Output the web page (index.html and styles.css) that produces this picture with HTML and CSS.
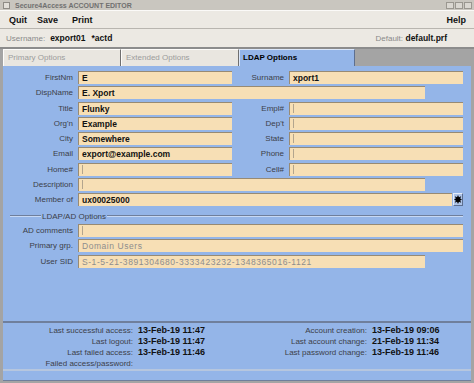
FILE: index.html
```html
<!DOCTYPE html>
<html lang="en">
<head>
    <meta charset="UTF-8">
    <title>Secure4Access ACCOUNT EDITOR</title>
    <link rel="stylesheet" href="styles.css">
</head>
<body>
    <div class="window">
        <div class="titlebar">
            <span class="tb-box"></span>
            <span class="tb-title">Secure4Access ACCOUNT EDITOR</span>
            <span class="tb-btns"><i></i><i></i><i></i></span>
        </div>

        <div class="menubar">
            <span>Quit</span>
            <span class="m-save">Save</span>
            <span class="m-print">Print</span>
            <span class="m-help">Help</span>
        </div>

        <div class="userbar">
            <span class="muted">Username:</span>
            <b class="uname">export01</b>
            <b class="flags">*actd</b>
            <span class="default"><span class="muted">Default:</span> <b>default.prf</b></span>
        </div>

        <div class="tabs">
            <div class="tab">Primary Options</div>
            <div class="tab">Extended Options</div>
            <div class="tab active">LDAP Options</div>
        </div>

        <div class="panel">
            <div class="form">
                <label class="lbl">FirstNm</label><div class="fld">E</div>
                <label class="lbl">Surname</label><div class="fld">xport1</div>

                <label class="lbl">DispName</label><div class="fld wide">E. Xport</div>

                <label class="lbl">Title</label><div class="fld">Flunky</div>
                <label class="lbl">Empl#</label><div class="fld empty"></div>

                <label class="lbl">Org'n</label><div class="fld">Example</div>
                <label class="lbl">Dep't</label><div class="fld empty"></div>

                <label class="lbl">City</label><div class="fld">Somewhere</div>
                <label class="lbl">State</label><div class="fld empty"></div>

                <label class="lbl">Email</label><div class="fld">export@example.com</div>
                <label class="lbl">Phone</label><div class="fld empty"></div>

                <label class="lbl">Home#</label><div class="fld empty"></div>
                <label class="lbl">Cell#</label><div class="fld empty"></div>

                <label class="lbl">Description</label><div class="fld wide empty"></div>

                <label class="lbl">Member of</label>
                <div class="member">
                    <div class="fld">ux00025000</div>
                    <span class="pick">
                        <svg width="8" height="9" viewBox="0 0 8 9">
                            <polygon points="4,0 5,2.3 7.2,1.3 6.2,3.5 8,4.5 6.2,5.5 7.2,7.7 5,6.7 4,9 3,6.7 0.8,7.7 1.8,5.5 0,4.5 1.8,3.5 0.8,1.3 3,2.3" fill="#000"/>
                        </svg>
                    </span>
                </div>

                <div class="sep"><span>LDAP/AD Options</span></div>

                <label class="lbl">AD comments</label><div class="fld full empty"></div>
                <label class="lbl">Primary grp.</label><div class="fld full dim">Domain Users</div>
                <label class="lbl">User SID</label><div class="fld wide dim">S-1-5-21-3891304680-3333423232-1348365016-1121</div>
            </div>
        </div>

        <div class="status">
            <span class="s-lbl">Last successful access:</span><span class="s-val">13-Feb-19 11:47</span>
            <span class="s-lbl">Account creation:</span><span class="s-val">13-Feb-19 09:06</span>

            <span class="s-lbl">Last logout:</span><span class="s-val">13-Feb-19 11:47</span>
            <span class="s-lbl">Last account change:</span><span class="s-val">21-Feb-19 11:34</span>

            <span class="s-lbl">Last failed access:</span><span class="s-val">13-Feb-19 11:46</span>
            <span class="s-lbl">Last password change:</span><span class="s-val">13-Feb-19 11:46</span>

            <span class="s-lbl">Failed access/password:</span><span class="s-val"></span>
        </div>

        <div class="foot"></div>
    </div>
</body>
</html>
```

FILE: styles.css
```css
body {
    margin: 0;
    font-family: "Liberation Sans", Arial, sans-serif;
    background-color: #a4a4a4;
}
.window {
    width: 474px;
    height: 383px;
    overflow: hidden;
    background-color: #a4a4a4;
}

/* title bar */
.titlebar {
    height: 10px;
    background-color: #c9c6bf;
    display: flex;
    align-items: center;
}
.tb-box {
    width: 7px;
    height: 7px;
    margin-left: 3px;
    box-sizing: border-box;
    border: 1px solid #8f8c86;
    background-color: #e2dfd9;
}
.tb-title {
    margin-left: 5px;
    font-size: 7px;
    font-weight: bold;
    color: #707070;
}
.tb-btns {
    margin-left: auto;
    margin-right: 2px;
    display: flex;
    gap: 1px;
}
.tb-btns i {
    width: 8px;
    height: 7px;
    box-sizing: border-box;
    border: 1px solid #9a9790;
    background-color: #dad7d1;
}

/* menu */
.menubar {
    height: 19px;
    box-sizing: border-box;
    background-color: #ece9e3;
    border-top: 1px solid #fbfaf8;
    border-bottom: 1px solid #b8b5af;
    display: flex;
    align-items: center;
    padding: 0 8px 0 9px;
    font-size: 9px;
    font-weight: bold;
    color: #111;
}
.m-save {
    margin-left: 10px;
}
.m-print {
    margin-left: 14px;
}
.m-help {
    margin-left: auto;
}

.userbar {
    height: 20px;
    box-sizing: border-box;
    background-color: #ece9e3;
    border-bottom: 2px solid #8c8c8c;
    display: flex;
    align-items: center;
    padding: 0 27px 0 6px;
    font-size: 8.5px;
    color: #111;
}
.muted {
    font-size: 8px;
    color: #8a8a8a;
}
.uname {
    margin-left: 5px;
}
.flags {
    margin-left: 6px;
}
.default {
    margin-left: auto;
}

/* tabs */
.tabs {
    height: 17px;
    display: flex;
    align-items: flex-end;
    padding-left: 3px;
}
.tab {
    width: 118px;
    height: 17px;
    box-sizing: border-box;
    border: 1px solid;
    border-color: #fdfcfa #6f6f6f transparent #fdfcfa;
    border-bottom: none;
    background-color: #e9e6e0;
    color: #9c9c9c;
    font-size: 8px;
    line-height: 16px;
    padding-left: 4px;
}
.tab.active {
    width: 116px;
    background-color: #94b5e8;
    border-color: #dbe7fa #5d6f90 transparent #dbe7fa;
    color: #000;
    font-weight: bold;
    padding-left: 3px;
}

/* main form */
.panel {
    height: 255px;
    margin: 0 3px;
    padding-top: 5px;
    box-sizing: border-box;
    background-color: #94b5e8;
}
.form {
    display: grid;
    grid-template-columns: 75px 154px 57px 174px;
    grid-auto-rows: 13px;
    row-gap: 2.3px;
}
.lbl {
    text-align: right;
    padding-right: 5px;
    font-size: 8px;
    line-height: 13px;
    color: #3c3f48;
    white-space: nowrap;
}
.fld {
    background-color: #f7dfb5;
    border-top: 1px solid #978a74;
    border-left: 1px solid #978a74;
    font-size: 8.5px;
    font-weight: bold;
    line-height: 12px;
    padding-left: 3px;
    color: #111;
    white-space: nowrap;
    overflow: hidden;
}
.fld.wide {
    grid-column: 2 / 5;
    margin-right: 38px;
}
.fld.full {
    grid-column: 2 / 5;
}
.fld.dim {
    font-weight: normal;
    color: #8d8d8d;
    letter-spacing: 0.55px;
}
.fld.empty::before {
    content: "";
    display: inline-block;
    width: 1px;
    height: 9px;
    margin-top: 1px;
    vertical-align: top;
    background-color: #b3a58e;
}
.member {
    grid-column: 2 / 5;
    display: flex;
    gap: 1px;
}
.member .fld {
    flex: 1;
}
.pick {
    width: 10px;
    box-sizing: border-box;
    border: 1px solid;
    border-color: #e4ecf9 #5d6f90 #5d6f90 #e4ecf9;
    background-color: #aec4e8;
    display: flex;
    align-items: center;
    justify-content: center;
}
.sep {
    grid-column: 1 / -1;
    margin-left: 7px;
    display: flex;
    align-items: center;
    font-size: 8px;
    color: #3c3f48;
    padding-top: 2px;
}
.sep::before, .sep::after {
    content: "";
    height: 0;
    border-top: 1px solid #6f7f9c;
    border-bottom: 1px solid #c8d9f4;
}
.sep::before {
    width: 31px;
}
.sep::after {
    flex: 1;
}
.sep span {
    padding: 0 1px;
}

/* status area */
.status {
    height: 50px;
    margin: 0 3px;
    box-sizing: border-box;
    padding-top: 2px;
    background-color: #94b5e8;
    border-top: 2px solid #6f7f9c;
    border-bottom: 2px solid #b6c6de;
    display: grid;
    grid-template-columns: 130px 100px 124px auto;
    grid-auto-rows: 11px;
    column-gap: 5px;
}
.s-lbl {
    text-align: right;
    font-size: 8px;
    line-height: 11px;
    color: #3c3f48;
    white-space: nowrap;
}
.s-val {
    font-size: 9px;
    font-weight: bold;
    line-height: 11px;
    color: #111;
    white-space: nowrap;
}
.foot {
    height: 9px;
    margin: 0 3px;
    background-color: #94b5e8;
    border-bottom: 1px solid #6f7f9c;
}
```
